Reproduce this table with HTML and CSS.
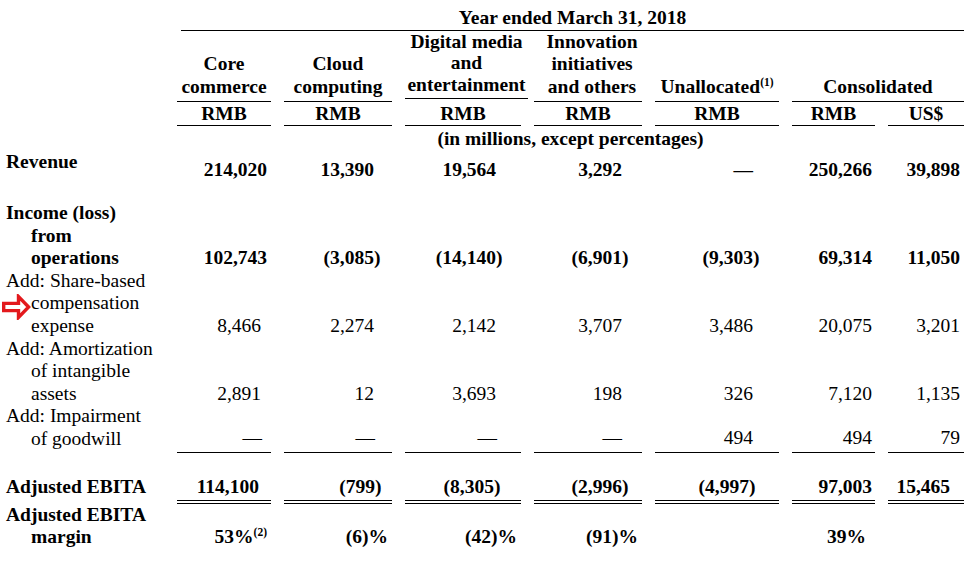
FILE: index.html
```html
<!DOCTYPE html>
<html lang="en">
<head>
<meta charset="utf-8">
<title>Segment results</title>
<link rel="stylesheet" href="styles.css">
</head>
<body>
<div class="sheet">
  <div class="grid title-row">
    <div class="title">Year ended March 31, 2018</div>
  </div>

  <div class="grid head-row">
    <div class="lbl"></div>
    <div class="h">Core<br>commerce</div>
    <div class="h">Cloud<br>computing</div>
    <div class="h h-digital">Digital media<br>and<br>entertainment</div>
    <div class="h h-innov">Innovation<br>initiatives<br>and others</div>
    <div class="h">Unallocated<sup class="fn">(1)</sup></div>
    <div class="h h-cons">Consolidated</div>
  </div>

  <div class="grid cur-row">
    <div class="lbl"></div>
    <div class="cur">RMB</div>
    <div class="cur">RMB</div>
    <div class="cur">RMB</div>
    <div class="cur">RMB</div>
    <div class="cur">RMB</div>
    <div class="cur">RMB</div>
    <div class="cur">US$</div>
  </div>

  <div class="grid units-row">
    <div class="units">(in millions, except percentages)</div>
  </div>

  <div class="grid row row-rev b">
    <div class="lbl"><span class="ln">Revenue</span></div>
    <div class="n c1 p4">214,020</div>
    <div class="n c2">13,390</div>
    <div class="n c3">19,564</div>
    <div class="n c4">3,292</div>
    <div class="n c5">&#8212;</div>
    <div class="n c6">250,266</div>
    <div class="n c7">39,898</div>
  </div>

  <div class="grid row row-inc b">
    <div class="lbl"><span class="ln">Income (loss)</span><span class="ln ind">from</span><span class="ln ind">operations</span></div>
    <div class="n c1 p4">102,743</div>
    <div class="n c2"><span class="neg">(3,085)</span></div>
    <div class="n c3"><span class="neg">(14,140)</span></div>
    <div class="n c4"><span class="neg">(6,901)</span></div>
    <div class="n c5"><span class="neg">(9,303)</span></div>
    <div class="n c6">69,314</div>
    <div class="n c7">11,050</div>
  </div>

  <div class="grid row">
    <div class="lbl lbl-mark">
      <span class="ln">Add: Share-based</span><span class="ln ind">compensation</span><span class="ln ind">expense</span>
      <svg class="arrow" width="32" height="26" viewBox="0 0 32 26" aria-hidden="true">
        <path d="M2.7 9.4 H17.5 V2.6 L27.6 13 L17.5 23.4 V16.6 H2.7 Z" fill="#fff" stroke="#e3191d" stroke-width="3.4" stroke-linejoin="miter"/>
      </svg>
    </div>
    <div class="n c1">8,466</div>
    <div class="n c2">2,274</div>
    <div class="n c3">2,142</div>
    <div class="n c4">3,707</div>
    <div class="n c5">3,486</div>
    <div class="n c6">20,075</div>
    <div class="n c7">3,201</div>
  </div>

  <div class="grid row">
    <div class="lbl"><span class="ln">Add: Amortization</span><span class="ln ind">of intangible</span><span class="ln ind">assets</span></div>
    <div class="n c1">2,891</div>
    <div class="n c2">12</div>
    <div class="n c3">3,693</div>
    <div class="n c4">198</div>
    <div class="n c5">326</div>
    <div class="n c6">7,120</div>
    <div class="n c7">1,135</div>
  </div>

  <div class="grid row row-gw">
    <div class="lbl"><span class="ln">Add: Impairment</span><span class="ln ind">of goodwill</span></div>
    <div class="n c1 dash1">&#8212;</div>
    <div class="n c2 dash2">&#8212;</div>
    <div class="n c3 dash3">&#8212;</div>
    <div class="n c4">&#8212;</div>
    <div class="n c5">494</div>
    <div class="n c6">494</div>
    <div class="n c7">79</div>
  </div>

  <div class="grid row row-ebita b">
    <div class="lbl"><span class="ln">Adjusted EBITA</span></div>
    <div class="n c1 e1">114,100</div>
    <div class="n c2 e2"><span class="neg">(799)</span></div>
    <div class="n c3 e3"><span class="neg">(8,305)</span></div>
    <div class="n c4 e4"><span class="neg">(2,996)</span></div>
    <div class="n c5 e5"><span class="neg">(4,997)</span></div>
    <div class="n c6">97,003</div>
    <div class="n c7 e7">15,465</div>
  </div>

  <div class="grid row row-margin b">
    <div class="lbl"><span class="ln">Adjusted EBITA</span><span class="ln ind">margin</span></div>
    <div class="n pc">53%<sup class="fn">(2)</sup></div>
    <div class="n pc">(6)%</div>
    <div class="n pc">(42)%</div>
    <div class="n pc">(91)%</div>
    <div class="n"></div>
    <div class="n pc pc6">39%</div>
    <div class="n"></div>
  </div>
</div>
</body>
</html>
```

FILE: styles.css
```css
html, body {
  margin: 0;
  padding: 0;
  background: #ffffff;
}

body {
  font-family: "Liberation Serif", "Times New Roman", serif;
  font-size: 19.5px;
  line-height: 22.6px;
  color: #000000;
  width: 964px;
  overflow: hidden;
}

.sheet {
  padding-top: 7px;
  width: 964px;
}

.grid {
  display: grid;
  grid-template-columns: 164px 94px 108px 116px 108px 124px 83px 76px;
  column-gap: 13px;
}

.b {
  font-weight: bold;
}

/* ---------- header ---------- */
.title {
  grid-column: 2 / -1;
  margin-left: 4px;
  text-align: center;
  font-weight: bold;
  padding-bottom: 0;
  border-bottom: 1px solid #000;
}

.h {
  align-self: end;
  text-align: center;
  font-weight: bold;
  padding-bottom: 2.5px;
  border-bottom: 1px solid #000;
}

.h-digital {
  align-self: start;
  line-height: 21.7px;
  padding-bottom: 2px;
  margin-right: -7px;
}

.h-innov {
  padding-left: 8px;
}

.h-cons {
  grid-column: span 2;
}

.fn {
  font-size: 11.5px;
  line-height: 0;
  vertical-align: 7px;
  font-weight: bold;
}

.cur {
  text-align: center;
  font-weight: bold;
  padding: 1px 0 0;
  border-bottom: 1px solid #000;
}

.units {
  grid-column: 2 / -1;
  text-align: center;
  font-weight: bold;
  padding-top: 1.4px;
  padding-bottom: 1px;
}

/* ---------- body rows ---------- */
.row {
  align-items: end;
}

.lbl {
  align-self: start;
  padding-left: 6px;
  white-space: nowrap;
}

.ln {
  display: block;
}

.ind {
  padding-left: 25px;
}

.lbl-mark {
  position: relative;
}

.arrow {
  position: absolute;
  left: 1px;
  top: 24px;
  display: block;
}

.n {
  text-align: right;
  white-space: nowrap;
  padding-right: var(--pr, 4px);
}

.c1 { --pr: 10px; }
.c2 { --pr: 18px; }
.c3 { --pr: 25px; }
.c4 { --pr: 20px; }
.c5 { --pr: 26px; }
.c6 { --pr: 3px; }
.c7 { --pr: 4px; }

.p4 { --pr: 4px; }

.neg {
  margin-right: -0.333em;
}

.row-rev .n {
  padding-top: 8px;
}

.row-inc {
  margin-top: 20px;
}

.row-gw .lbl {
  padding-bottom: 2px;
}

.row-gw .n {
  padding-bottom: 2px;
  border-bottom: 1px solid #000;
}

.dash1 { --pr: 9px; }
.dash2 { --pr: 17px; }
.dash3 { --pr: 24px; }

.row-ebita {
  margin-top: 23.4px;
}

.row-ebita .n {
  padding-bottom: 1px;
  border-bottom: 4px double #000;
}

.e1 { --pr: 12px; }
.e2 { --pr: 17px; }
.e3 { --pr: 27px; }
.e4 { --pr: 20px; }
.e5 { --pr: 30px; }
.e7 { --pr: 14px; }

.pc { --pr: 4px; }
.pc6 { --pr: 9px; }
```
